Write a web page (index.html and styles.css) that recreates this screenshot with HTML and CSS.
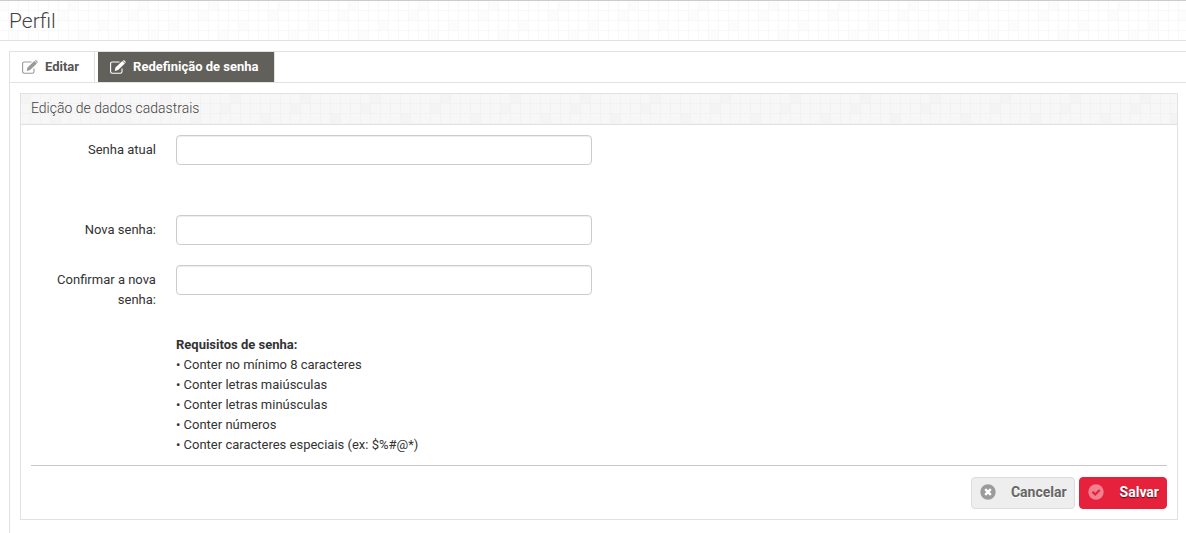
FILE: index.html
```html
<!DOCTYPE html>
<html lang="pt-BR">
<head>
<meta charset="utf-8">
<title>Perfil</title>
<link rel="stylesheet" href="styles.css">
</head>
<body>
<svg class="sprite" aria-hidden="true">
  <symbol id="icon-edit" viewBox="0 0 16 14">
    <path d="M9.5 2H2.2Q.6 2 .6 3.6v8Q.6 13.3 2.2 13.3h8.2q1.6 0 1.6-1.7V8.4" fill="none" stroke="currentColor" stroke-width="1.1"/>
    <path d="M4.7 10.9l.8-3.4L12.3 1 14.9 3.5 8.1 10z" fill="currentColor"/>
    <path d="M13.9.1l2 1.9-.7.9L12.9.7z" fill="currentColor"/>
  </symbol>
</svg>
<header class="page-head"><h1 class="page-title">Perfil</h1></header>
<main class="widget">
  <nav class="tabs">
    <a class="tab" href="#editar"><svg class="tab-icon"><use href="#icon-edit"/></svg>Editar</a>
    <a class="tab tab-active" href="#senha" aria-current="page"><svg class="tab-icon"><use href="#icon-edit"/></svg>Redefinição de senha</a>
  </nav>
  <div class="pane">
    <section class="box">
      <h2 class="box-title">Edição de dados cadastrais</h2>
      <form class="box-body">
        <div class="row row-current">
          <label class="label" for="atual">Senha atual</label>
          <input class="field" id="atual" type="password">
        </div>
        <div class="row">
          <label class="label" for="nova">Nova senha:</label>
          <input class="field" id="nova" type="password">
        </div>
        <div class="row">
          <label class="label" for="confirma">Confirmar a nova senha:</label>
          <input class="field" id="confirma" type="password">
        </div>
        <div class="rules">
          <strong>Requisitos de senha:</strong>
          <div>• Conter no mínimo 8 caracteres</div>
          <div>• Conter letras maiúsculas</div>
          <div>• Conter letras minúsculas</div>
          <div>• Conter números</div>
          <div>• Conter caracteres especiais (ex: $%#@*)</div>
        </div>
        <div class="actions">
          <button class="btn" type="button"><svg class="btn-icon" viewBox="0 0 16 16"><circle cx="8" cy="8" r="7.7" fill="#9b9b9b"/><path d="M5.2 5.2l5.6 5.6M10.8 5.2l-5.6 5.6" stroke="#fff" stroke-width="2.4"/></svg>Cancelar</button>
          <button class="btn btn-save" type="submit"><svg class="btn-icon" viewBox="0 0 16 16"><circle cx="8" cy="8" r="7.7" fill="#f2808f"/><path d="M4.4 7.8l2.8 2.7 4.5-4.6" fill="none" stroke="#e6213c" stroke-width="2.2"/></svg>Salvar</button>
        </div>
      </form>
    </section>
  </div>
</main>
</body>
</html>
```
FILE: styles.css
```css
* { box-sizing: border-box; }
body {
  margin: 0;
  min-height: 100vh;
  display: flex;
  flex-direction: column;
  background: #fff;
  color: #333;
  font: 13px/20px Roboto, sans-serif;
}
.sprite { display: none; }
.page-head, .box-title {
  --line: #f8f8f8;
  --cell: #fcfcfc;
  background-image:
    linear-gradient(90deg, var(--line) 1px, transparent 1px),
    linear-gradient(var(--line) 1px, transparent 1px),
    linear-gradient(90deg, var(--cell) 10px, transparent 10px),
    linear-gradient(90deg, var(--cell) 10px, transparent 10px),
    linear-gradient(90deg, var(--cell) 10px, transparent 10px),
    linear-gradient(90deg, var(--cell) 10px, transparent 10px);
  background-repeat: repeat, repeat, repeat-x, repeat-x, repeat-x, repeat-x;
  background-size: 10px 10px, 10px 10px, 70px 10px, 70px 10px, 70px 10px, 70px 10px;
}
.page-head {
  padding: 5px 9px 4px;
  border-top: 1px solid #ccc;
  border-bottom: 1px solid #e2e2e2;
  background-position: 8px 0, 0 9px, 68px 0, 58px 10px, 28px 20px, 8px 30px;
}
.page-title {
  margin: 0;
  font-size: 21px;
  line-height: 30px;
  font-weight: 300;
  color: #444;
}
.widget {
  flex: 1;
  margin: 10px 0 0 9px;
  border: solid #e2e2e2;
  border-width: 1px 0 0 1px;
}
.tabs {
  display: flex;
  gap: 3px;
  border-bottom: 1px solid #e2e2e2;
}
.tab {
  display: flex;
  align-items: center;
  gap: 7px;
  padding: 0 15px 0 12px;
  border-right: 1px solid #e2e2e2;
  line-height: 30px;
  font-weight: 700;
  color: #555;
  text-decoration: none;
}
.tab-icon { width: 16px; height: 14px; color: #999; }
.tab-active { background: #62605a; color: #fff; }
.tab-active .tab-icon { color: #fff; }
.pane { padding: 10px 8px 13px 10px; }
.box { border: 1px solid #e2e2e2; }
.box-title {
  --line: #f2f2f2;
  --cell: #f4f4f4;
  margin: 0;
  padding: 0 10px 2px;
  border-bottom: 1px solid #e2e2e2;
  background-color: #f7f7f7;
  background-position: 9px 0, 0 9px, 69px 0, 59px 10px, 29px 20px, 0 40px;
  font-size: 14px;
  line-height: 28px;
  font-weight: 300;
  color: #444;
}
.box-body { padding: 10px; }
.row {
  display: grid;
  grid-template-columns: 11% 1fr;
  column-gap: 20px;
  align-items: start;
  margin-bottom: 20px;
}
.row-current { margin-bottom: 50px; }
.label { padding-top: 5px; text-align: right; }
.field {
  width: 42%;
  height: 30px;
  padding: 4px 6px;
  border: 1px solid #ccc;
  border-radius: 4px;
  background: #fff;
  box-shadow: inset 0 1px 1px rgba(0, 0, 0, .075);
  font: inherit;
}
.rules { margin: 25px 0 10px calc(11% + 20px); }
.actions {
  display: flex;
  justify-content: flex-end;
  gap: 4px;
  padding-top: 11px;
  border-top: 1px solid #c8c8c8;
}
.btn {
  display: flex;
  align-items: center;
  gap: 15px;
  height: 32px;
  padding: 0 7px 2px 8px;
  border: 1px solid #dcdcdc;
  border-radius: 4px;
  background: #eee;
  color: #666;
  font: 700 14px/20px Roboto, sans-serif;
  text-shadow: 0 1px 0 #fff;
}
.btn-icon { width: 16px; height: 16px; }
.btn-save {
  padding-left: 9px;
  border-color: #e6213c;
  background: #e6213c;
  color: #fff;
  text-shadow: 0 1px 1px rgba(0, 0, 0, .6);
}
.btn-save .btn-icon { margin-left: -1px; margin-right: 1px; }
```
